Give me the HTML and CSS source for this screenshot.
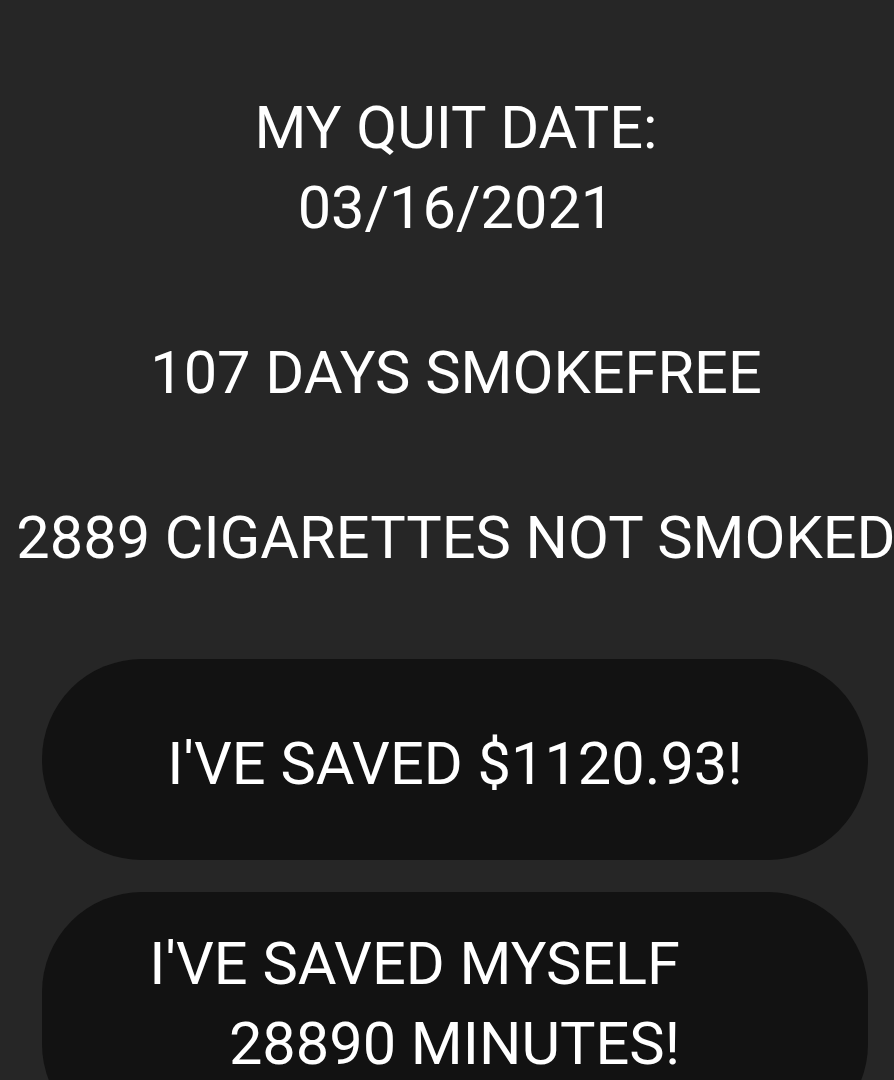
FILE: index.html
```html
<!DOCTYPE html>
<html lang="en">
<head>
  <meta charset="UTF-8">
  <title>Quit Tracker</title>
  <link rel="stylesheet" href="styles.css">
</head>
<body>

  <div class="stats">
    <p class="stat">MY QUIT DATE:<br>03/16/2021</p>
    <p class="stat">107 DAYS SMOKEFREE</p>
    <p class="stat">2889 CIGARETTES NOT SMOKED</p>
  </div>

  <div class="savings">
    <button class="pill money">I'VE SAVED $1120.93!</button>
    <button class="pill time">I'VE SAVED MYSELF<br>28890 MINUTES!</button>
  </div>

</body>
</html>
```

FILE: styles.css
```css
body {
  margin: 0;
  background-color: #262626;
  color: #fff;
  font-family: Roboto, "Noto Sans", sans-serif;
  overflow: hidden;
}

.stats {
  display: flex;
  flex-direction: column;
  align-items: center;
  gap: 85px;
  padding: 88px 0 0 18px;
}

.stat {
  margin: 0;
  font-size: 59.5px;
  line-height: 80px;
  text-align: center;
  white-space: nowrap;
}

.savings {
  display: flex;
  flex-direction: column;
  gap: 32px;
  margin: 81px 26px 0 42px;
}

.pill {
  display: block;
  width: 100%;
  border: none;
  border-radius: 100px;
  background-color: #121212;
  color: #fff;
  font-family: inherit;
  font-size: 59.5px;
  line-height: 80px;
  cursor: pointer;
}

.money {
  padding: 65px 20px 56px;
  text-align: center;
}

.time {
  padding: 32px 188px 60px 20px;
  text-align: right;
}
```
